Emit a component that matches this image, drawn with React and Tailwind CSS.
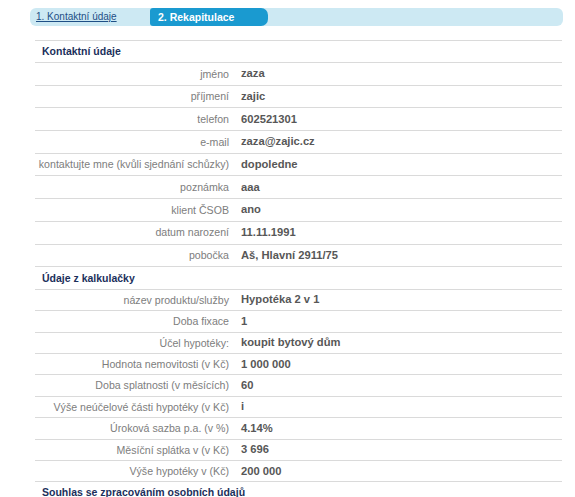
import React from 'react';

const contact = [
  ['jméno', 'zaza'],
  ['příjmení', 'zajic'],
  ['telefon', '602521301'],
  ['e-mail', 'zaza@zajic.cz'],
  ['kontaktujte mne (kvůli sjednání schůzky)', 'dopoledne'],
  ['poznámka', 'aaa'],
  ['klient ČSOB', 'ano'],
  ['datum narození', '11.11.1991'],
  ['pobočka', 'Aš, Hlavní 2911/75'],
];

const calc = [
  ['název produktu/služby', 'Hypotéka 2 v 1'],
  ['Doba fixace', '1'],
  ['Účel hypotéky:', 'koupit bytový dům'],
  ['Hodnota nemovitosti (v Kč)', '1 000 000'],
  ['Doba splatnosti (v měsících)', '60'],
  ['Výše neúčelové části hypotéky (v Kč)', 'i'],
  ['Úroková sazba p.a. (v %)', '4.14%'],
  ['Měsíční splátka v (v Kč)', '3 696'],
  ['Výše hypotéky v (Kč)', '200 000'],
];

function Heading({ children, h }) {
  return (
    <div className={`flex items-center border-b border-[#dadada] pl-[7px] text-[10.5px] font-bold text-[#1b2f5b] ${h}`}>
      {children}
    </div>
  );
}

function Row({ label, value, h }) {
  return (
    <div className={`flex items-center border-b border-[#dadada] ${h}`}>
      <div className="flex w-[194px] shrink-0 justify-end whitespace-nowrap text-[10.6px] text-[#7d7d7d]">{label}</div>
      <div className="whitespace-nowrap pl-[12px] text-[11.2px] font-bold text-[#575757]">{value}</div>
    </div>
  );
}

export default function App() {
  return (
    <div className="min-h-screen bg-white text-[10.5px] leading-none" style={{ fontFamily: '"Liberation Sans", Arial, sans-serif' }}>
      <div className="pt-[8px] pl-[30px] pr-[12px]">
        {/* kroky formuláře */}
        <div className="flex h-[18px] rounded-[6px] bg-[#cde9f3]">
          <div className="flex w-[120px] items-center pl-[6px] text-[10px] text-[#1e4f86] underline">1. Kontaktní údaje</div>
          <div className="flex w-[118px] items-center rounded-l-[3px] rounded-r-[7px] bg-[#1a9ad0] pl-[8px] font-bold text-white">
            2. Rekapitulace
          </div>
        </div>
      </div>

      <div className="mt-[14px] ml-[35px] mr-[13px] border-t border-[#dadada]">
        <Heading h="h-[22px]">Kontaktní údaje</Heading>
        {contact.map(([l, v]) => (
          <Row key={l} label={l} value={v} h="h-[22.7px]" />
        ))}
        <Heading h="h-[22.7px]">Údaje z kalkulačky</Heading>
        {calc.map(([l, v]) => (
          <Row key={l} label={l} value={v} h="h-[21.4px]" />
        ))}
        <Heading h="h-[20px]">Souhlas se zpracováním osobních údajů</Heading>
      </div>
    </div>
  );
}
